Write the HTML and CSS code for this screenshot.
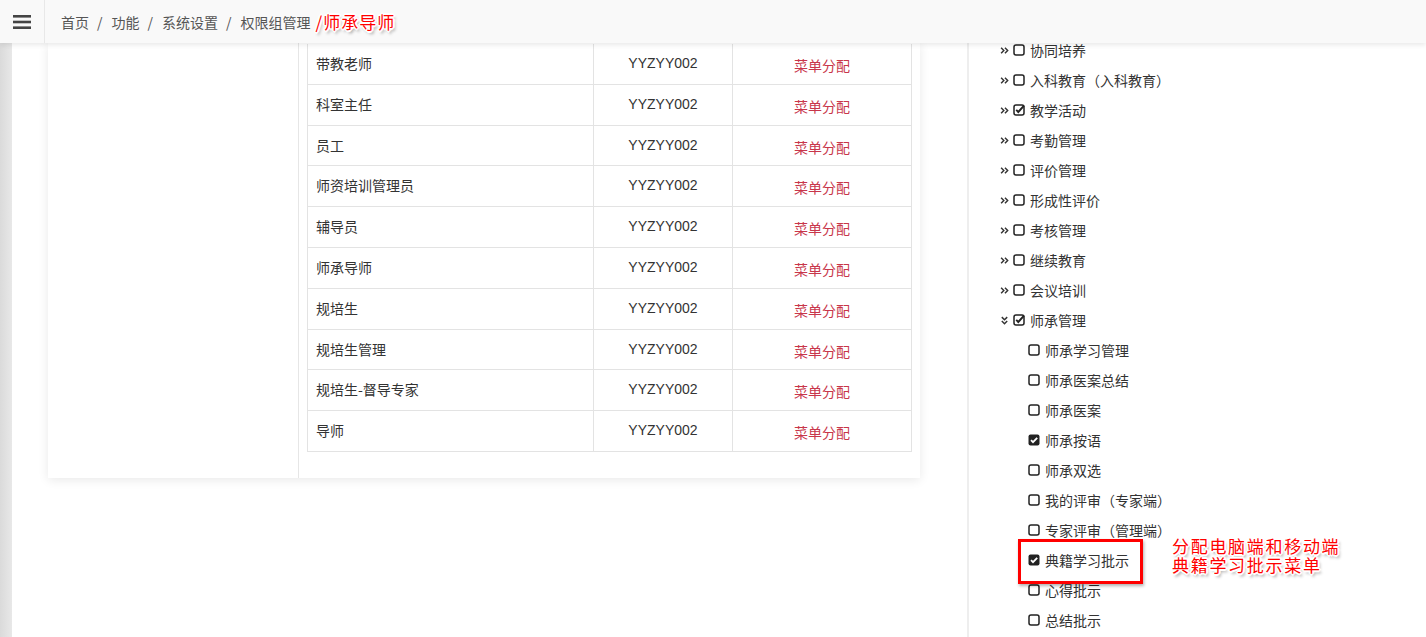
FILE: index.html
```html
<!DOCTYPE html>
<html lang="zh-CN">
<head>
    <meta charset="UTF-8">
    <meta name="viewport" content="width=device-width, initial-scale=1.0">
    <title>权限组管理</title>
    <link rel="stylesheet" href="styles.css">
</head>
<body>
    <header class="topbar">
        <button class="menu-toggle" type="button" aria-label="菜单">
            <svg width="18" height="14" viewBox="0 0 18 14"><rect y="0" width="18" height="2.6" fill="#444"/><rect y="5.7" width="18" height="2.6" fill="#444"/><rect y="11.4" width="18" height="2.6" fill="#444"/></svg>
        </button>
        <ol class="breadcrumb">
            <li>首页</li>
            <li>功能</li>
            <li>系统设置</li>
            <li>权限组管理</li>
        </ol>
        <span class="note note-crumb">/师承导师</span>
    </header>

    <div class="layout">
        <aside class="side-strip"></aside>

        <main class="content">
            <section class="role-card">
                <div class="role-side"></div>
                <div class="role-table-wrap">
                    <table class="role-table">
                        <tbody>
                            <tr><td>带教老师</td><td class="code">YYZYY002</td><td class="action"><a href="#">菜单分配</a></td></tr>
                            <tr><td>科室主任</td><td class="code">YYZYY002</td><td class="action"><a href="#">菜单分配</a></td></tr>
                            <tr><td>员工</td><td class="code">YYZYY002</td><td class="action"><a href="#">菜单分配</a></td></tr>
                            <tr><td>师资培训管理员</td><td class="code">YYZYY002</td><td class="action"><a href="#">菜单分配</a></td></tr>
                            <tr><td>辅导员</td><td class="code">YYZYY002</td><td class="action"><a href="#">菜单分配</a></td></tr>
                            <tr><td>师承导师</td><td class="code">YYZYY002</td><td class="action"><a href="#">菜单分配</a></td></tr>
                            <tr><td>规培生</td><td class="code">YYZYY002</td><td class="action"><a href="#">菜单分配</a></td></tr>
                            <tr><td>规培生管理</td><td class="code">YYZYY002</td><td class="action"><a href="#">菜单分配</a></td></tr>
                            <tr><td>规培生-督导专家</td><td class="code">YYZYY002</td><td class="action"><a href="#">菜单分配</a></td></tr>
                            <tr><td>导师</td><td class="code">YYZYY002</td><td class="action"><a href="#">菜单分配</a></td></tr>
                        </tbody>
                    </table>
                </div>
            </section>
        </main>

        <aside class="perm-panel">
            <ul class="perm-tree">
                <li class="node"><svg class="arrow" viewBox="0 0 8 8"><path d="M1 1.6L3.4 4L1 6.4M4.4 1.6L6.8 4L4.4 6.4"/></svg><svg class="box" viewBox="0 0 12 12"><rect x="1" y="1" width="10" height="10" rx="2"/></svg><span>协同培养</span></li>
                <li class="node"><svg class="arrow" viewBox="0 0 8 8"><path d="M1 1.6L3.4 4L1 6.4M4.4 1.6L6.8 4L4.4 6.4"/></svg><svg class="box" viewBox="0 0 12 12"><rect x="1" y="1" width="10" height="10" rx="2"/></svg><span>入科教育（入科教育）</span></li>
                <li class="node"><svg class="arrow" viewBox="0 0 8 8"><path d="M1 1.6L3.4 4L1 6.4M4.4 1.6L6.8 4L4.4 6.4"/></svg><svg class="box" viewBox="0 0 12 12"><rect x="1" y="1" width="10" height="10" rx="2"/><path class="tick" d="M3.2 5.8L5.3 8L11 1.6"/></svg><span>教学活动</span></li>
                <li class="node"><svg class="arrow" viewBox="0 0 8 8"><path d="M1 1.6L3.4 4L1 6.4M4.4 1.6L6.8 4L4.4 6.4"/></svg><svg class="box" viewBox="0 0 12 12"><rect x="1" y="1" width="10" height="10" rx="2"/></svg><span>考勤管理</span></li>
                <li class="node"><svg class="arrow" viewBox="0 0 8 8"><path d="M1 1.6L3.4 4L1 6.4M4.4 1.6L6.8 4L4.4 6.4"/></svg><svg class="box" viewBox="0 0 12 12"><rect x="1" y="1" width="10" height="10" rx="2"/></svg><span>评价管理</span></li>
                <li class="node"><svg class="arrow" viewBox="0 0 8 8"><path d="M1 1.6L3.4 4L1 6.4M4.4 1.6L6.8 4L4.4 6.4"/></svg><svg class="box" viewBox="0 0 12 12"><rect x="1" y="1" width="10" height="10" rx="2"/></svg><span>形成性评价</span></li>
                <li class="node"><svg class="arrow" viewBox="0 0 8 8"><path d="M1 1.6L3.4 4L1 6.4M4.4 1.6L6.8 4L4.4 6.4"/></svg><svg class="box" viewBox="0 0 12 12"><rect x="1" y="1" width="10" height="10" rx="2"/></svg><span>考核管理</span></li>
                <li class="node"><svg class="arrow" viewBox="0 0 8 8"><path d="M1 1.6L3.4 4L1 6.4M4.4 1.6L6.8 4L4.4 6.4"/></svg><svg class="box" viewBox="0 0 12 12"><rect x="1" y="1" width="10" height="10" rx="2"/></svg><span>继续教育</span></li>
                <li class="node"><svg class="arrow" viewBox="0 0 8 8"><path d="M1 1.6L3.4 4L1 6.4M4.4 1.6L6.8 4L4.4 6.4"/></svg><svg class="box" viewBox="0 0 12 12"><rect x="1" y="1" width="10" height="10" rx="2"/></svg><span>会议培训</span></li>
                <li class="node open"><svg class="arrow" viewBox="0 0 8 8"><path d="M1.6 1L4 3.4L6.4 1M1.6 4.4L4 6.8L6.4 4.4"/></svg><svg class="box" viewBox="0 0 12 12"><rect x="1" y="1" width="10" height="10" rx="2"/><path class="tick" d="M3.2 5.8L5.3 8L11 1.6"/></svg><span>师承管理</span></li>
                <li class="leaf"><svg class="box" viewBox="0 0 12 12"><rect x="1" y="1" width="10" height="10" rx="2"/></svg><span>师承学习管理</span></li>
                <li class="leaf"><svg class="box" viewBox="0 0 12 12"><rect x="1" y="1" width="10" height="10" rx="2"/></svg><span>师承医案总结</span></li>
                <li class="leaf"><svg class="box" viewBox="0 0 12 12"><rect x="1" y="1" width="10" height="10" rx="2"/></svg><span>师承医案</span></li>
                <li class="leaf"><svg class="box filled" viewBox="0 0 12 12"><rect x="0.5" y="0.5" width="11" height="11" rx="2"/><path class="tick" d="M3 6.2L5 8.2L9.2 3.8"/></svg><span>师承按语</span></li>
                <li class="leaf"><svg class="box" viewBox="0 0 12 12"><rect x="1" y="1" width="10" height="10" rx="2"/></svg><span>师承双选</span></li>
                <li class="leaf"><svg class="box" viewBox="0 0 12 12"><rect x="1" y="1" width="10" height="10" rx="2"/></svg><span>我的评审（专家端）</span></li>
                <li class="leaf"><svg class="box" viewBox="0 0 12 12"><rect x="1" y="1" width="10" height="10" rx="2"/></svg><span>专家评审（管理端）</span></li>
                <li class="leaf marked"><svg class="box filled" viewBox="0 0 12 12"><rect x="0.5" y="0.5" width="11" height="11" rx="2"/><path class="tick" d="M3 6.2L5 8.2L9.2 3.8"/></svg><span>典籍学习批示</span>
                    <span class="note note-tip"><span>分配电脑端和移动端</span><span>典籍学习批示菜单</span></span>
                </li>
                <li class="leaf"><svg class="box" viewBox="0 0 12 12"><rect x="1" y="1" width="10" height="10" rx="2"/></svg><span>心得批示</span></li>
                <li class="leaf"><svg class="box" viewBox="0 0 12 12"><rect x="1" y="1" width="10" height="10" rx="2"/></svg><span>总结批示</span></li>
            </ul>
        </aside>
    </div>
</body>
</html>
```

FILE: styles.css
```css
* { box-sizing: border-box; margin: 0; padding: 0; }
body {
    font-family: "Noto Sans CJK SC", "Noto Sans", sans-serif;
    font-size: 14px;
    color: #333;
    background: #fff;
    height: 100vh;
    overflow: hidden;
}

/* top bar */
.topbar {
    position: relative;
    z-index: 2;
    height: 43px;
    display: flex;
    align-items: center;
    background: #f9f9f9;
    box-shadow: 0 2px 5px rgba(0, 0, 0, 0.09);
}
.menu-toggle {
    width: 45px;
    height: 43px;
    display: flex;
    align-items: center;
    justify-content: center;
    background: none;
    border: none;
    border-right: 1px solid #e8e8e8;
    padding-left: 0;
    padding-right: 1px;
}
.breadcrumb {
    list-style: none;
    display: flex;
    margin-left: 16px;
    color: #555;
    line-height: 20px;
}
.breadcrumb li + li::before {
    content: "/";
    margin: 0 9px 0 8px;
    color: #555;
}

/* red hand-drawn hints */
.note {
    color: #f00;
    font-size: 17px;
    letter-spacing: 1px;
    text-shadow:
        -1px -1px 0 #fff, 1px -1px 0 #fff, -1px 1px 0 #fff, 1px 1px 0 #fff,
        -2px 0 0 #fff, 2px 0 0 #fff, 0 -2px 0 #fff, 0 2px 0 #fff,
        2px 3px 3px rgba(0, 0, 0, 0.45);
}
.note-crumb {
    margin-left: 5px;
    margin-top: -1px;
}

/* page body */
.layout {
    display: flex;
    height: calc(100vh - 43px);
}
.side-strip {
    width: 12px;
    flex: none;
    background: linear-gradient(90deg, #dadada, #e8e8e8);
}
.content {
    width: 955px;
    flex: none;
    padding-left: 36px;
}
.role-card {
    width: 872px;
    display: flex;
    background: #fff;
    box-shadow: 0 2px 10px rgba(0, 0, 0, 0.09);
}
.role-side {
    width: 251px;
    flex: none;
    border-right: 1px solid #e6e6e6;
}
.role-table-wrap {
    flex: 1;
    padding: 1px 8px 26px 8px;
}
.role-table {
    width: 605px;
    border-collapse: collapse;
}
.role-table td {
    border: 1px solid #e3e3e3;
    border-top: none;
    padding: 10px 8px;
    line-height: 19.8px;
}
.role-table tr + tr td { border-top: 1px solid #e3e3e3; }
.role-table td:nth-child(1) { width: 286px; }
.role-table td:nth-child(2) { width: 139px; }
.role-table .code {
    text-align: center;
    font-family: "Liberation Sans", "Noto Sans CJK SC", sans-serif;
}
.role-table .action { text-align: center; }
.role-table .action a {
    color: #c8364a;
    text-decoration: none;
    position: relative;
    top: 2px;
}

/* permission tree */
.perm-panel {
    flex: 1;
    border-left: 2px solid #eeeeee;
}
.perm-tree {
    list-style: none;
    padding-left: 31px;
}
.perm-tree li {
    height: 30px;
    display: flex;
    align-items: center;
    color: #333;
    white-space: nowrap;
}
/* first row is partly scrolled under the top bar */
.perm-tree li:first-child {
    height: 22px;
    align-items: flex-start;
}
.perm-tree li:first-child .box { margin-top: 1px; }
.perm-tree li:first-child .arrow { margin-top: 3px; }
.perm-tree li > span:not(.note) { line-height: 14px; }
.perm-tree .arrow {
    width: 9px;
    height: 9px;
    margin-right: 4px;
    fill: none;
    stroke: #333;
    stroke-width: 1.3;
}
.perm-tree .box {
    width: 12px;
    height: 12px;
    margin-right: 5px;
    overflow: visible;
}
.perm-tree .box rect {
    fill: none;
    stroke: #222;
    stroke-width: 1.5;
}
.perm-tree .box .tick {
    fill: none;
    stroke: #222;
    stroke-width: 1.9;
}
.perm-tree .box.filled rect { fill: #222; stroke: none; }
.perm-tree .box.filled .tick { stroke: #fff; stroke-width: 1.8; }
.perm-tree .leaf { padding-left: 28px; }

.perm-tree .marked { position: relative; }
.perm-tree .marked::before {
    content: "";
    position: absolute;
    left: 18px;
    top: -6px;
    width: 119px;
    height: 39px;
    border: 3px solid #f00;
    box-shadow: 1px 2px 3px rgba(0, 0, 0, 0.3);
}
.note-tip {
    position: absolute;
    left: 172px;
    top: -9px;
    display: flex;
    flex-direction: column;
    font-size: 17px;
    letter-spacing: 1.7px;
    line-height: 19px;
    white-space: nowrap;
}
.note-tip span { height: 19px; }
```
